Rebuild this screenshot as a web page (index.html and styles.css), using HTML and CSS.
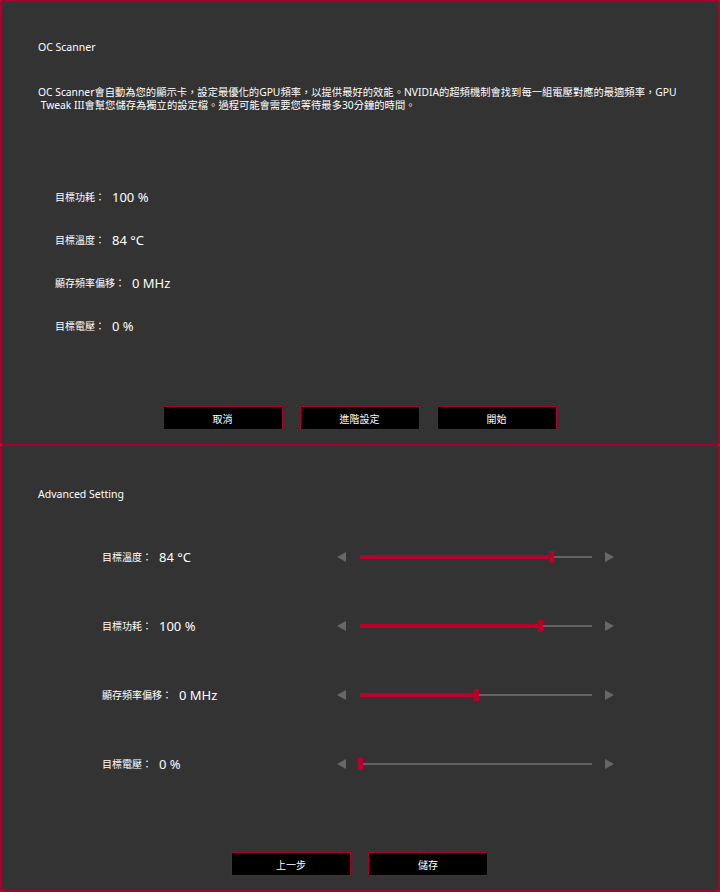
FILE: index.html
```html
<!DOCTYPE html>
<html lang="zh-Hant">
<head>
  <meta charset="UTF-8">
  <title>OC Scanner</title>
  <link rel="stylesheet" href="styles.css">
</head>
<body>

  <!-- OC Scanner 面板 -->
  <section class="panel scanner">
    <h1 class="panel-title">OC Scanner</h1>
    <p class="desc">
      OC Scanner會自動為您的顯示卡，設定最優化的GPU頻率，以提供最好的效能。NVIDIA的超頻機制會找到每一組電壓對應的最適頻率，GPU<br>&nbsp;Tweak III會幫您儲存為獨立的設定檔。過程可能會需要您等待最多30分鐘的時間。
    </p>

    <ul class="targets">
      <li><span class="label">目標功耗：</span><span class="value">100 %</span></li>
      <li><span class="label">目標溫度：</span><span class="value">84 °C</span></li>
      <li><span class="label">顯存頻率偏移：</span><span class="value">0 MHz</span></li>
      <li><span class="label">目標電壓：</span><span class="value">0 %</span></li>
    </ul>

    <div class="actions">
      <button class="btn">取消</button>
      <button class="btn">進階設定</button>
      <button class="btn">開始</button>
    </div>
  </section>

  <!-- 進階設定面板 -->
  <section class="panel advanced">
    <h2 class="panel-title">Advanced Setting</h2>

    <div class="settings">
      <div class="setting">
        <div class="setting-name"><span class="label">目標溫度：</span><span class="value">84 °C</span></div>
        <span class="arrow left"></span>
        <div class="slider"><div class="fill" style="width: 82.5%"><span class="thumb"></span></div></div>
        <span class="arrow right"></span>
      </div>
      <div class="setting">
        <div class="setting-name"><span class="label">目標功耗：</span><span class="value">100 %</span></div>
        <span class="arrow left"></span>
        <div class="slider"><div class="fill" style="width: 77.6%"><span class="thumb"></span></div></div>
        <span class="arrow right"></span>
      </div>
      <div class="setting">
        <div class="setting-name"><span class="label">顯存頻率偏移：</span><span class="value">0 MHz</span></div>
        <span class="arrow left"></span>
        <div class="slider"><div class="fill" style="width: 49.8%"><span class="thumb"></span></div></div>
        <span class="arrow right"></span>
      </div>
      <div class="setting">
        <div class="setting-name"><span class="label">目標電壓：</span><span class="value">0 %</span></div>
        <span class="arrow left"></span>
        <div class="slider"><div class="fill" style="width: 0%"><span class="thumb"></span></div></div>
        <span class="arrow right"></span>
      </div>
    </div>

    <div class="actions">
      <button class="btn">上一步</button>
      <button class="btn">儲存</button>
    </div>
  </section>

</body>
</html>
```

FILE: styles.css
```css
body {
  margin: 0;
  padding: 0;
  background: #333;
  color: #fff;
  font-family: "Noto Sans", "Noto Sans CJK TC", sans-serif;
}

/* Панели */
.panel {
  box-sizing: border-box;
  width: 720px;
  height: 446px;
  background: #333;
  border: 2px solid #a8002c;
  padding-left: 36px;
}

.scanner {
  padding-top: 38px;
}

.advanced {
  border-top: 0;
  padding-top: 41px;
}

.panel-title {
  margin: 0;
  font-size: 10.5px;
  line-height: 14px;
  font-weight: normal;
}

.desc {
  margin: 32px 0 0;
  font-size: 10.3px;
  line-height: 13px;
  white-space: nowrap;
}

/* Целевые значения */
.targets {
  list-style: none;
  margin: 63px 0 0;
  padding: 0 0 0 17px;
}

.targets li {
  display: flex;
  align-items: center;
  height: 43px;
}

.label {
  font-size: 10px;
  margin-right: 7px;
}

.value {
  font-size: 13px;
}

/* Кнопки */
.actions {
  display: flex;
  justify-content: center;
  gap: 17px;
  margin-left: -37px;
  margin-top: 59px;
}

.advanced .actions {
  margin-top: 54px;
}

.btn {
  box-sizing: border-box;
  width: 120px;
  height: 24px;
  background: #000;
  border: 1px solid #a8002c;
  color: #fff;
  font-family: inherit;
  font-size: 10px;
  padding: 0;
  cursor: pointer;
}

/* Ползунки */
.settings {
  margin-top: 21px;
}

.setting {
  display: flex;
  align-items: center;
  height: 69px;
  padding-left: 64px;
}

.setting-name {
  display: flex;
  align-items: center;
  width: 235px;
}

.arrow {
  width: 0;
  height: 0;
  border-top: 5px solid transparent;
  border-bottom: 5px solid transparent;
}

.arrow.left {
  border-right: 9px solid #676767;
}

.arrow.right {
  border-left: 9px solid #676767;
}

.slider {
  display: flex;
  align-items: center;
  width: 232px;
  height: 12px;
  margin: 0 13px 0 14px;
  background: linear-gradient(#626262, #626262) center / 100% 2px no-repeat;
}

.fill {
  position: relative;
  height: 4px;
  background: #b8002f;
}

.thumb {
  position: absolute;
  right: -3px;
  top: -4px;
  width: 5px;
  height: 12px;
  background: #b8002f;
}
```
